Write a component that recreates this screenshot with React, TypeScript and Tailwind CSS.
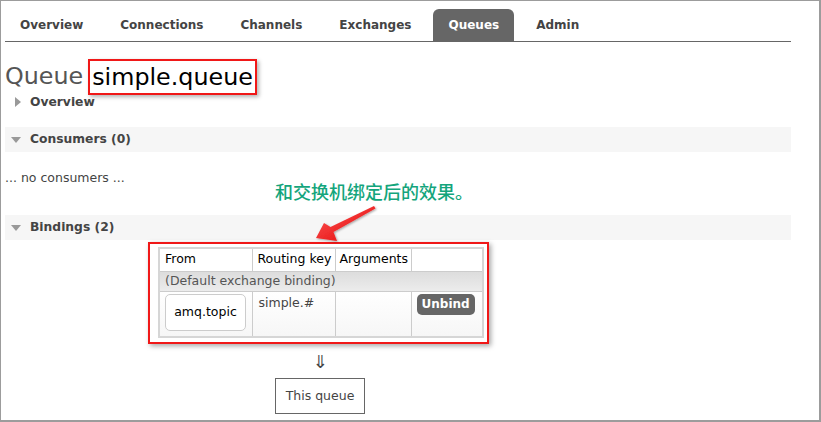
import React from "react";

const tabs = ["Overview", "Connections", "Channels", "Exchanges", "Queues", "Admin"];

function SectionHeader({ title }: { title: string }) {
  return (
    <div className="flex items-center h-[25px] bg-[#f6f6f6] pl-[6px]">
      <span className="w-0 h-0 border-l-[5px] border-r-[5px] border-t-[6px] border-l-transparent border-r-transparent border-t-[#999]" />
      <span className="ml-[9px] text-[12.3px] font-bold text-[#444]">{title}</span>
    </div>
  );
}

function RedArrow() {
  return (
    <svg className="absolute left-0 top-0 pointer-events-none" width="821" height="422">
      <defs>
        <filter id="arrowShadow" x="-20%" y="-20%" width="140%" height="140%">
          <feDropShadow dx="1" dy="1" stdDeviation="1" floodColor="#000" floodOpacity="0.35" />
        </filter>
        <linearGradient id="arrowFill" x1="0" y1="0" x2="1" y2="1">
          <stop offset="0" stopColor="#ff5a5a" />
          <stop offset="1" stopColor="#e00000" />
        </linearGradient>
      </defs>
      <polygon
        filter="url(#arrowShadow)"
        fill="url(#arrowFill)"
        points="315,237 323,222 329.5,226 373,205 374.5,207.5 332.5,231 336,240"
      />
    </svg>
  );
}

export default function App() {
  return (
    <div
      className="relative w-[821px] h-[422px] overflow-hidden bg-white border-l border-t border-r-2 border-b-2 border-[#9c9c9c] text-[#444]"
      style={{ fontFamily: '"DejaVu Sans", Verdana, sans-serif' }}
    >
      <div className="ml-[4px] w-[786px]">
        <nav className="flex gap-[7px] pt-[8px] border-b border-[#666]">
          {tabs.map((t) => (
            <div
              key={t}
              className={
                t === "Queues"
                  ? "h-[32px] px-[15px] flex items-center rounded-t-[6px] bg-[#666] text-white text-[12px] font-bold"
                  : "h-[32px] px-[15px] flex items-center text-[#444] text-[12px] font-bold"
              }
            >
              {t}
            </div>
          ))}
        </nav>

        <h1 className="flex items-center gap-[5px] h-[36px] mt-[17px] text-[23.8px] font-normal text-[#555]">
          <span>Queue</span>
          <span className="inline-block border-2 border-[#f01818] px-[2px] leading-[32px] text-black shadow-[2px_2px_4px_rgba(0,0,0,0.3)]">
            simple.queue
          </span>
        </h1>

        <div className="flex items-center h-[16px] mt-[-1px] pl-[10px]">
          <span className="w-0 h-0 border-t-[5px] border-b-[5px] border-l-[6px] border-t-transparent border-b-transparent border-l-[#999]" />
          <span className="ml-[9px] text-[12.3px] font-bold text-[#444]">Overview</span>
        </div>

        <div className="mt-[17px]">
          <SectionHeader title="Consumers (0)" />
        </div>

        <p className="mt-[18px] text-[12.5px] leading-[16px] text-[#444]">... no consumers ...</p>

        <div className="mt-[29px]">
          <SectionHeader title="Bindings (2)" />
        </div>

        <div className="ml-[143px] mt-[2px] flex flex-col items-start">
          <div className="border-2 border-[#f01818] pl-[8px] pr-[3px] pt-[3px] pb-[4px] shadow-[2px_2px_5px_rgba(0,0,0,0.35)]">
            <table className="table-fixed w-[324px] border-collapse border-2 border-[#d6d6d6] text-[12.5px] whitespace-nowrap">
              <thead>
                <tr className="h-[23px] bg-white text-black">
                  <th className="w-[93px] border border-[#ccc] px-[5px] text-left font-normal">From</th>
                  <th className="w-[83px] border border-[#ccc] px-[5px] text-left font-normal">Routing key</th>
                  <th className="w-[76px] border border-[#ccc] px-[4px] text-left font-normal">Arguments</th>
                  <th className="w-[72px] border border-[#ccc]" />
                </tr>
              </thead>
              <tbody>
                <tr className="h-[20px] bg-gradient-to-b from-[#dcdcdc] to-[#ececec]">
                  <td colSpan={4} className="border border-[#ccc] px-[5px] text-[#555]">
                    (Default exchange binding)
                  </td>
                </tr>
                <tr className="h-[46px] bg-gradient-to-b from-white to-[#f6f6f6]">
                  <td className="border border-[#ccc] px-[5px] py-[2px] align-top">
                    <div className="w-[81px] h-[37px] flex items-center justify-center border border-[#ccc] rounded-[5px] bg-white text-black">
                      amq.topic
                    </div>
                  </td>
                  <td className="border border-[#ccc] px-[6px] pt-[2px] align-top text-[#444]">simple.#</td>
                  <td className="border border-[#ccc]" />
                  <td className="border border-[#ccc] px-[5px] pt-[2px] align-top">
                    <span className="inline-flex items-center justify-center h-[21px] px-[5px] rounded-[5px] bg-[#666] text-white font-bold text-[12px]">
                      Unbind
                    </span>
                  </td>
                </tr>
              </tbody>
            </table>
          </div>
        </div>

        <div className="ml-[153px] w-[324px] flex flex-col items-center">
          <div className="mt-[8px] h-[20px] leading-[20px] text-[18px] text-[#444]">⇓</div>
          <div className="mt-[6px] h-[36px] px-[10px] flex items-center border border-[#666] text-[12.5px] text-[#444]">
            This queue
          </div>
        </div>
      </div>

      <div
        className="absolute left-[274px] top-[178px] text-[18px] leading-[24px] font-medium text-[#14a57c]"
        style={{ fontFamily: '"Noto Sans CJK SC", sans-serif' }}
      >
        和交换机绑定后的效果。
      </div>

      <RedArrow />
    </div>
  );
}
